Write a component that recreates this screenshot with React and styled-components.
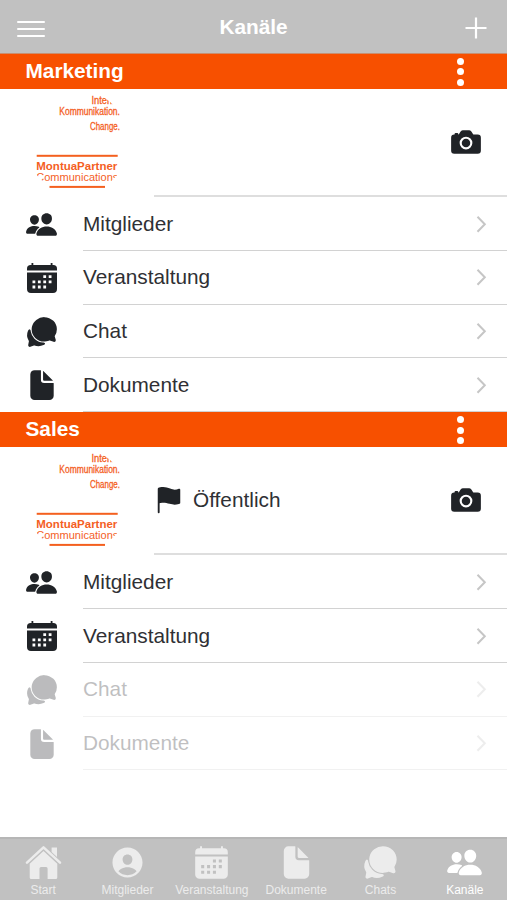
import React from "react";
import styled, { createGlobalStyle } from "styled-components";
import {
  IoCamera,
  IoChatbubbles,
  IoDocument,
  IoFlag,
  IoPeople,
  IoPersonCircle
} from "react-icons/io5";

const GlobalStyle = createGlobalStyle`
  * { box-sizing: border-box; }
  body {
    margin: 0;
    background: #fff;
    color: #2f3034;
    font-family: "Liberation Sans", Arial, sans-serif;
  }
`;

const Screen = styled.div`
  display: flex;
  flex-direction: column;
  height: 900px;
  overflow: hidden;
`;

const Header = styled.header`
  display: grid;
  grid-template-columns: 60px 1fr 60px;
  align-items: center;
  height: 54px;
  flex: none;
  background: #c1c1c1;
  border-bottom: 1px solid #c98f70;
  color: #fff;
`;

const HeaderTitle = styled.h1`
  margin: 0;
  text-align: center;
  font-size: 20.8px;
  line-height: 54px;
`;

const MenuButton = styled.button`
  display: flex;
  flex-direction: column;
  justify-content: space-between;
  width: 28px;
  height: 17px;
  margin: 4px 0 0 17px;
  padding: 0;
  border: 0;
  background: none;
`;

const MenuLine = styled.span`
  height: 2.4px;
  border-radius: 1px;
  background: #fff;
`;

const AddButton = styled.button`
  display: flex;
  margin: 2px 0 0 18px;
  padding: 0;
  border: 0;
  background: none;
  color: #fff;
`;

const Content = styled.main`
  flex: 1;
`;

const Band = styled.div`
  display: flex;
  align-items: center;
  justify-content: space-between;
  height: 34.7px;
  padding: 0 43px 0 25.5px;
  background: #f75000;
  color: #fff;
`;

const BandTitle = styled.h2`
  margin: 0;
  padding-bottom: 1px;
  font-size: 20.8px;
  line-height: 34px;
`;

const Dots = styled.div`
  display: flex;
  flex-direction: column;
  gap: 3.8px;
  padding-top: 1px;
`;

const Dot = styled.i`
  width: 7px;
  height: 7px;
  border-radius: 50%;
  background: #fff;
`;

const Intro = styled.div`
  display: flex;
  height: 108.5px;
`;

const IntroBody = styled.div`
  display: flex;
  flex: 1;
  align-items: center;
  gap: 9px;
  padding-right: 24px;
  border-bottom: 2px solid #dedede;
  font-size: 20.8px;
`;

const Push = styled.span`
  display: flex;
  margin-left: auto;
  color: #202327;
`;

const Row = styled.div`
  display: flex;
  height: 53.75px;
  opacity: ${props => (props.$disabled ? 0.3 : 1)};
`;

const RowIcon = styled.div`
  display: flex;
  align-items: center;
  justify-content: center;
  width: 83px;
  color: #202327;
`;

const RowBody = styled.div`
  display: flex;
  flex: 1;
  align-items: center;
  justify-content: space-between;
  padding-right: 18px;
  border-bottom: 1.5px solid #d2d2d2;
  font-size: 20.8px;
`;

const TabBar = styled.nav`
  display: grid;
  grid-template-columns: repeat(6, 1fr);
  height: 63px;
  flex: none;
  padding-left: 1px;
  background: #c1c1c1;
  border-top: 2px solid #b6b6b6;
`;

const Tab = styled.a`
  display: flex;
  flex-direction: column;
  align-items: center;
  padding-top: 5px;
  color: ${props => (props.$active ? "#fff" : "#ececec")};
  font-size: 12px;
  line-height: 18px;
  white-space: nowrap;
`;

const Chevron = () => (
  <svg width="14" height="20" viewBox="0 0 14 20" fill="none">
    <path d="M2.5 2.8 9.8 10.3 2.5 17.8" stroke="#c6c6c6" strokeWidth="2" />
  </svg>
);

const CalendarIcon = ({ size }) => (
  <svg width={size} height={size} viewBox="0 0 34 34" fill="currentColor">
    <path
      fillRule="evenodd"
      d="M6.5 2h1.8v2h17.4V2h1.8v2h.8A3.7 3.7 0 0 1 32 7.7V9.6H2V7.7A3.7 3.7 0 0 1 5.7 4h.8zM2 11.6h30V28a4 4 0 0 1-4 4H6a4 4 0 0 1-4-4zM18.3 14.2v2.8h2.8v-2.8zM23.7 14.2v2.8h2.8v-2.8zM7.5 19.4v2.8h2.8v-2.8zM12.9 19.4v2.8h2.8v-2.8zM18.3 19.4v2.8h2.8v-2.8zM23.7 19.4v2.8h2.8v-2.8zM7.5 24.6v2.8h2.8v-2.8zM12.9 24.6v2.8h2.8v-2.8zM18.3 24.6v2.8h2.8v-2.8z"
    />
  </svg>
);

const HomeIcon = ({ size }) => (
  <svg width={size} height={size} viewBox="0 0 37 37" fill="currentColor">
    <path d="M2 18.6 18.5 3.4 35 18.6" fill="none" stroke="currentColor" strokeWidth="2.6" strokeLinecap="round" strokeLinejoin="round" />
    <path d="M26.6 3.4H32V13L26.6 8z" />
    <path d="M18.5 7 32.3 19.8V33.4a1.6 1.6 0 0 1-1.6 1.6H22.6V24.6a1.5 1.5 0 0 0-1.5-1.5H16a1.5 1.5 0 0 0-1.5 1.5V35H6.3a1.6 1.6 0 0 1-1.6-1.6V19.8z" />
  </svg>
);

// round avatar, its edge cuts off parts of the wordmark
const Logo = ({ id }) => (
  <svg width="154" height="108" viewBox="0 0 154 108" fill="#f4601f" fontFamily="Liberation Sans, Arial, sans-serif">
    <clipPath id={id}>
      <circle cx="77" cy="53" r="52" />
    </clipPath>
    <g fontSize="10" stroke="#f4601f" strokeWidth="0.3">
      <text x="91.5" y="14.8" textLength="31" lengthAdjust="spacingAndGlyphs" clipPath={`url(#${id})`}>Interim.</text>
      <text x="59.3" y="26" textLength="60.6" lengthAdjust="spacingAndGlyphs">Kommunikation.</text>
      <text x="90" y="41.1" textLength="29.9" lengthAdjust="spacingAndGlyphs">Change.</text>
    </g>
    <rect x="36.7" y="65.8" width="81" height="2" />
    <text x="36.3" y="80.8" fontSize="11.2" fontWeight="bold" textLength="81" lengthAdjust="spacingAndGlyphs">MontuaPartner</text>
    <text x="36.3" y="92.3" fontSize="11.2" textLength="82" lengthAdjust="spacingAndGlyphs" clipPath={`url(#${id})`}>Communications</text>
    <rect x="49.5" y="96.9" width="55.5" height="2" />
  </svg>
);

const rows = [
  { label: "Mitglieder", Icon: IoPeople },
  { label: "Veranstaltung", Icon: CalendarIcon },
  { label: "Chat", Icon: IoChatbubbles },
  { label: "Dokumente", Icon: IoDocument }
];

const channels = [
  { name: "Marketing", open: false, disabled: [] },
  { name: "Sales", open: true, disabled: ["Chat", "Dokumente"] }
];

const tabs = [
  { label: "Start", Icon: HomeIcon },
  { label: "Mitglieder", Icon: IoPersonCircle },
  { label: "Veranstaltung", Icon: CalendarIcon },
  { label: "Dokumente", Icon: IoDocument },
  { label: "Chats", Icon: IoChatbubbles },
  { label: "Kanäle", Icon: IoPeople, active: true }
];

const Channel = ({ name, open, disabled }) => (
  <section>
    <Band>
      <BandTitle>{name}</BandTitle>
      <Dots>
        <Dot />
        <Dot />
        <Dot />
      </Dots>
    </Band>
    <Intro>
      <Logo id={"logo-" + name} />
      <IntroBody>
        {open && (
          <>
            <IoFlag size={30} color="#202327" />
            <span>Öffentlich</span>
          </>
        )}
        <Push>
          <IoCamera size={34} />
        </Push>
      </IntroBody>
    </Intro>
    {rows.map(({ label, Icon }) => (
      <Row key={label} $disabled={disabled.includes(label)}>
        <RowIcon>
          <Icon size={label === "Mitglieder" ? 33 : 34} />
        </RowIcon>
        <RowBody>
          <span>{label}</span>
          <Chevron />
        </RowBody>
      </Row>
    ))}
  </section>
);

export default function App() {
  return (
    <React.Fragment>
      <GlobalStyle />
      <Screen>
        <Header>
          <MenuButton>
            <MenuLine />
            <MenuLine />
            <MenuLine />
          </MenuButton>
          <HeaderTitle>Kanäle</HeaderTitle>
          <AddButton>
            <svg width="22" height="22" viewBox="0 0 22 22" stroke="#fff" strokeWidth="2.2">
              <path d="M11 0.5V21.5M0.5 11H21.5" />
            </svg>
          </AddButton>
        </Header>
        <Content>
          {channels.map(channel => (
            <Channel key={channel.name} {...channel} />
          ))}
        </Content>
        <TabBar>
          {tabs.map(({ label, Icon, active }) => (
            <Tab key={label} $active={active}>
              <Icon size={37} />
              {label}
            </Tab>
          ))}
        </TabBar>
      </Screen>
    </React.Fragment>
  );
}
